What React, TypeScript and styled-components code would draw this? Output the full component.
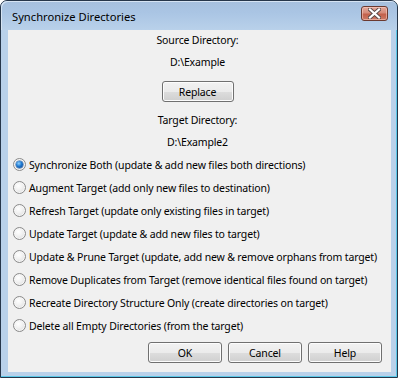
import React from "react";
import styled, { createGlobalStyle } from "styled-components";

const Global = createGlobalStyle`
  html, body { margin: 0; padding: 0; background: #ffffff; }
  body { font-family: "Noto Sans", "Open Sans", sans-serif; font-size: 10.5px; letter-spacing: -0.15px; color: #000; }
  * { box-sizing: border-box; }
`;

const Window = styled.div`
  width: 398px;
  height: 378px;
  border: 1px solid #26364a;
  border-radius: 7px 7px 0 0;
  background: #b9d1ea;
  box-shadow: inset -1px -1px 0 #5ac8e8;
  display: flex;
  flex-direction: column;
  overflow: hidden;
`;

const TitleBar = styled.div`
  height: 29px;
  flex: none;
  display: flex;
  align-items: center;
  justify-content: space-between;
  padding: 0 9px 0 11px;
  background: linear-gradient(#a6c0de 0%, #aac5e4 40%, #b9d1ea 100%);
  border-top-left-radius: 6px;
  border-top-right-radius: 6px;
  box-shadow: inset 1px 1px 0 #d6e4f3;
`;

const Title = styled.span`
  font-size: 11.2px;
  letter-spacing: 0;
  color: #000;
  padding-top: 2px;
`;

const CloseBtn = styled.div`
  width: 27px;
  height: 15px;
  margin-top: -4px;
  border: 1px solid #6b3a30;
  border-radius: 3px;
  background: linear-gradient(#e3a89b 0%, #d58b7a 45%, #c3604b 55%, #cc7a66 100%);
  box-shadow: inset 0 0 0 1px rgba(255, 215, 205, 0.5);
  display: flex;
  align-items: center;
  justify-content: center;
`;

const Client = styled.div`
  flex: 1;
  margin: 0 6px 5px 7px;
  background: #f0f0f0;
  display: flex;
  flex-direction: column;
  align-items: center;
  padding: 2px 9px 7px 5px;
`;

const Label = styled.div<{ $gap?: number }>`
  height: 16px;
  line-height: 16px;
  margin-top: ${(p) => p.$gap ?? 0}px;
  text-align: center;
`;

const Button = styled.button<{ $w?: number }>`
  width: ${(p) => p.$w ?? 74}px;
  height: 21px;
  font-family: inherit;
  font-size: 10.5px;
  letter-spacing: -0.15px;
  color: #000;
  padding: 0;
  border: 1px solid #707070;
  border-radius: 3px;
  background: linear-gradient(#f2f2f2 0%, #ebebeb 50%, #dddddd 51%, #cfcfcf 100%);
  box-shadow: inset 0 0 0 1px #fcfcfc;
  cursor: default;
`;

const ReplaceWrap = styled.div`
  margin-top: 11px;
  margin-bottom: 10px;
`;

const RadioList = styled.div`
  align-self: stretch;
  display: flex;
  flex-direction: column;
  margin-top: 3px;
`;

const RadioRow = styled.label`
  height: 23px;
  display: flex;
  align-items: center;
  gap: 3px;
  white-space: nowrap;
`;

const RadioCircle = styled.span<{ $on?: boolean }>`
  width: 13px;
  height: 13px;
  flex: none;
  border-radius: 50%;
  border: 1px solid #8a8a8a;
  background: radial-gradient(circle at 40% 35%, #ffffff 0%, #f2f2f2 40%, #d6d6d6 100%);
  box-shadow: inset 0 0 0 1px #f6f6f6;
  display: flex;
  align-items: center;
  justify-content: center;

  &::after {
    content: "";
    display: ${(p) => (p.$on ? "block" : "none")};
    width: 7px;
    height: 7px;
    border-radius: 50%;
    background: radial-gradient(circle at 40% 35%, #8fd1ff 0%, #1f79d0 45%, #0b3f8a 100%);
    box-shadow: 0 0 0 0.5px #2d5f9a;
  }
`;

const ButtonRow = styled.div`
  align-self: flex-end;
  display: flex;
  gap: 6px;
  margin-top: 5px;
`;

const options = [
  "Synchronize Both (update & add new files both directions)",
  "Augment Target (add only new files to destination)",
  "Refresh Target (update only existing files in target)",
  "Update Target (update & add new files to target)",
  "Update & Prune Target (update, add new & remove orphans from target)",
  "Remove Duplicates from Target (remove identical files found on target)",
  "Recreate Directory Structure Only (create directories on target)",
  "Delete all Empty Directories (from the target)",
];

export default function App() {
  return (
    <>
      <Global />
      <Window>
        <TitleBar>
          <Title>Synchronize Directories</Title>
          <CloseBtn>
            <svg width="13" height="11" viewBox="0 0 13 11">
              <path d="M2 1.5 L11 9.5 M11 1.5 L2 9.5" stroke="#5a4a48" strokeWidth="4" strokeLinecap="square" />
              <path d="M2 1.5 L11 9.5 M11 1.5 L2 9.5" stroke="#ffffff" strokeWidth="2.2" strokeLinecap="square" />
            </svg>
          </CloseBtn>
        </TitleBar>
        <Client>
          <Label>Source Directory:</Label>
          <Label $gap={6}>D:\Example</Label>
          <ReplaceWrap>
            <Button $w={72}>Replace</Button>
          </ReplaceWrap>
          <Label>Target Directory:</Label>
          <Label $gap={6}>D:\Example2</Label>
          <RadioList>
            {options.map((o, i) => (
              <RadioRow key={o}>
                <RadioCircle $on={i === 0} />
                {o}
              </RadioRow>
            ))}
          </RadioList>
          <ButtonRow>
            <Button>OK</Button>
            <Button>Cancel</Button>
            <Button>Help</Button>
          </ButtonRow>
        </Client>
      </Window>
    </>
  );
}
